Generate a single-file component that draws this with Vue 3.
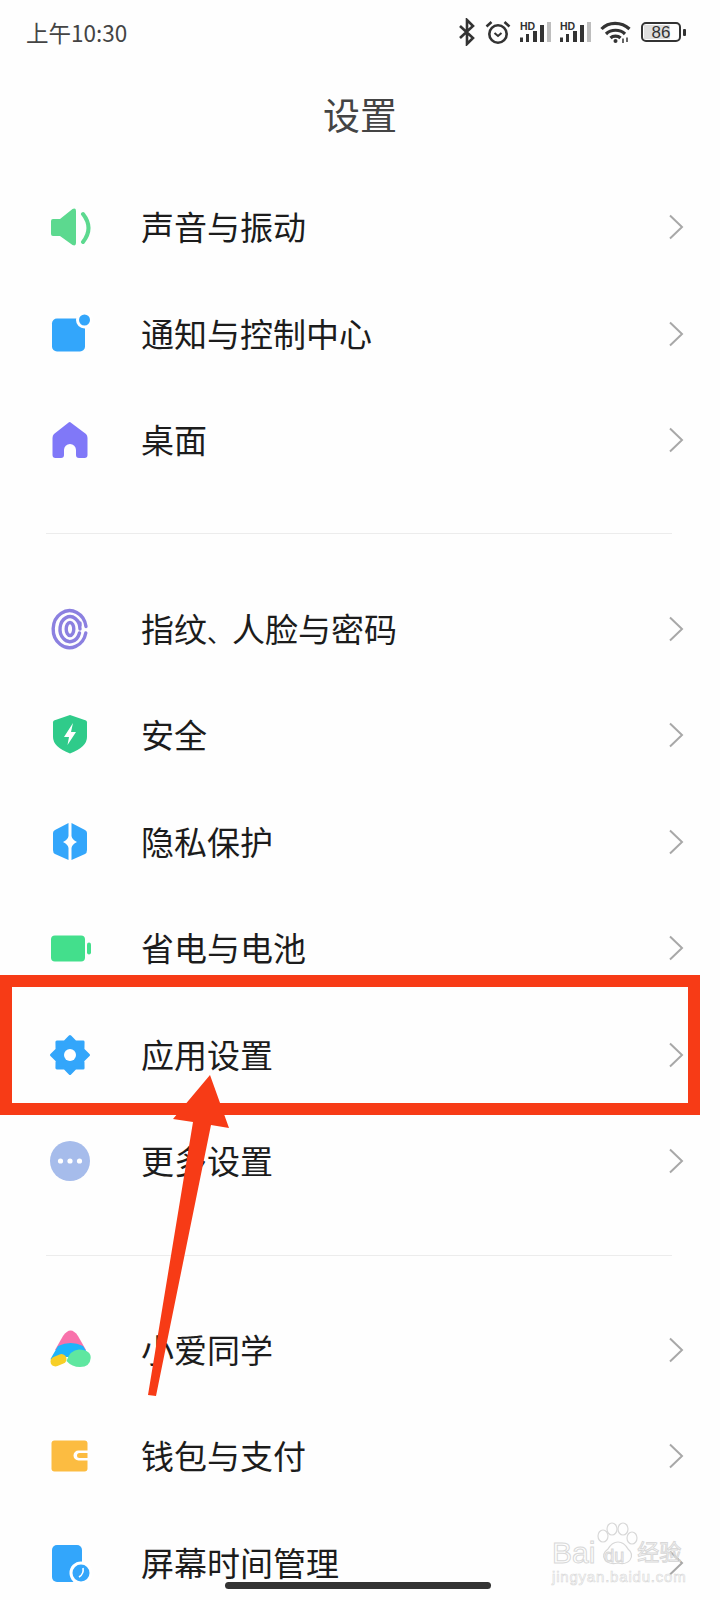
<script setup>
const groups = [
  [
    { name: '声音与振动', icon: 'sound' },
    { name: '通知与控制中心', icon: 'notify' },
    { name: '桌面', icon: 'home' },
  ],
  [
    { name: '指纹、人脸与密码', icon: 'finger' },
    { name: '安全', icon: 'shield' },
    { name: '隐私保护', icon: 'privacy' },
    { name: '省电与电池', icon: 'battery' },
    { name: '应用设置', icon: 'gear' },
    { name: '更多设置', icon: 'more' },
  ],
  [
    { name: '小爱同学', icon: 'xiaoai' },
    { name: '钱包与支付', icon: 'wallet' },
    { name: '屏幕时间管理', icon: 'screen' },
  ],
]
const gearPoints = Array.from({ length: 16 }, (_, i) => {
  const a = (i * Math.PI) / 8
  const r = i % 2 === 0 ? 18.5 : 14
  return `${(24 + r * Math.sin(a)).toFixed(2)},${(24 - r * Math.cos(a)).toFixed(2)}`
}).join(' ')
</script>

<template>
  <div class="page">
    <div class="status">
      <span class="time">上午10:30</span>
      <div class="status-icons">
        <svg width="18" height="28" viewBox="0 0 18 28" fill="none" stroke="#333" stroke-width="2.6"><path d="M2 8 15 20 9 26V2L15 8 2 20"/></svg>
        <svg width="26" height="24" viewBox="0 0 26 24" fill="none" stroke="#333" stroke-width="2.6"><circle cx="13" cy="14" r="8.7"/><path d="M9.500 13l3.500 3 3.500-3" stroke-width="2"/><path d="M1.500 6.500 6.500 2M24.500 6.500 19.500 2"/></svg>
        <span v-for="n in 2" :key="n" class="signal">
          <span class="hd">HD</span>
          <svg width="31" height="20" viewBox="0 0 31 20"><rect x="0" y="15.500" width="3" height="4.500" fill="#333"/><rect x="6" y="12" width="3" height="8" fill="#333"/><rect x="13" y="9" width="4" height="11" fill="#333"/><rect x="20" y="3" width="4" height="17" fill="#333"/><rect x="27" y="0" width="4" height="20" fill="#bdbdbd"/></svg>
        </span>
        <svg width="31" height="22" viewBox="0 0 31 22" fill="none" stroke="#333" stroke-width="3.200"><path d="M1.500 8C8.500 0.500 21.500 0.500 29.500 8"/><path d="M6 13C11 8 20 8 25 13"/><path d="M10.500 17C13 14.500 18 14.500 20.500 17"/><circle cx="15.500" cy="20" r="2" fill="#333" stroke="none"/><path d="M23 17.500v4.500M27 16.500v4.500" stroke-width="1.500"/></svg>
        <div class="batt"><div class="batt-body"><span class="batt-fill"></span><span class="batt-num">86</span></div><span class="batt-tip"></span></div>
      </div>
    </div>
    <h1 class="title">设置</h1>
    <div class="groups">
      <section v-for="(group, g) in groups" :key="g" class="group">
        <div v-for="item in group" :key="item.name" class="row">
          <span class="icon">
            <svg width="48" height="48" viewBox="0 0 48 48">
              <template v-if="item.icon === 'sound'">
                <path d="M5 18Q5 16 7 16H14L26.500 6Q30 4.500 30 8V40Q30 43.500 26.500 42L14 33H7Q5 33 5 31Z" fill="#5cd98f"/>
                <path d="M37 11Q48 25 37 39" fill="none" stroke="#5cd98f" stroke-width="4" stroke-linecap="round"/>
              </template>
              <template v-else-if="item.icon === 'notify'">
                <rect x="6" y="8.500" width="33" height="33" rx="5" fill="#33a6fb"/>
                <circle cx="38.500" cy="10" r="8.500" fill="#fff"/>
                <circle cx="38.500" cy="10" r="5.500" fill="#33a6fb"/>
              </template>
              <template v-else-if="item.icon === 'home'">
                <path d="M24 6 40 18Q41.500 19.500 41.500 22V39Q41.500 42 38.500 42H33Q30 42 30 39V34A6 6 0 0 0 18 34V39Q18 42 15 42H9.500Q6.500 42 6.500 39V22Q6.500 19.500 8 18L22 7Q23 6 24 6Z" fill="#8078f8"/>
              </template>
              <template v-else-if="item.icon === 'finger'">
                <g fill="none" stroke="#8b80e0" stroke-width="3.400" stroke-linecap="round">
                  <path d="M40 21.500A16.500 18.500 0 1 0 39.800 28"/>
                  <path d="M34 24A10 12.500 0 1 0 33.500 28M34 18V21" />
                  <ellipse cx="24" cy="24" rx="3.800" ry="6.500"/>
                </g>
              </template>
              <template v-else-if="item.icon === 'shield'">
                <path d="M24 4 40 9.500Q41 10 41 11.500V26Q41 36 24 42.500Q7 36 7 26V11.500Q7 10 8 9.500Z" fill="#2fcb8a"/>
                <path d="M27 12 18 26H23L21.500 34 30 21H25Z" fill="#fff"/>
              </template>
              <template v-else-if="item.icon === 'privacy'">
                <path d="M22.500 5V18Q22 21.500 17 24Q22 26.500 22.500 30V42L9 36Q7 35 7 32V15Q7 13 9 12Z" fill="#33a6fb"/>
                <path d="M25.500 5V18Q26 21.500 31 24Q26 26.500 25.500 30V42L39 36Q41 35 41 32V15Q41 13 39 12Z" fill="#33a6fb"/>
              </template>
              <template v-else-if="item.icon === 'battery'">
                <rect x="5" y="11.500" width="34" height="26" rx="4" fill="#43df8c"/>
                <rect x="41" y="18.500" width="4" height="12" rx="2" fill="#43df8c"/>
              </template>
              <template v-else-if="item.icon === 'gear'">
                <polygon :points="gearPoints" fill="#33a6fb" stroke="#33a6fb" stroke-width="3" stroke-linejoin="round"/>
                <circle cx="24" cy="24" r="6" fill="#fff"/>
              </template>
              <template v-else-if="item.icon === 'more'">
                <circle cx="24" cy="24" r="20" fill="#a6bceb"/>
                <circle cx="14.500" cy="24" r="2.600" fill="#fff"/>
                <circle cx="24" cy="24" r="2.600" fill="#fff"/>
                <circle cx="33.500" cy="24" r="2.600" fill="#fff"/>
              </template>
              <template v-else-if="item.icon === 'xiaoai'">
                <path d="M17 10Q24.700 -1 32 10L40 24H9Z" fill="#f872ab"/>
                <path d="M12 20Q25 14 37 20L44 31H30H20L10 38 4.500 33Z" fill="#1eb4fb"/>
                <path d="M9.500 35.500 15.500 33" fill="none" stroke="#f7cf27" stroke-width="10" stroke-linecap="round"/>
                <path d="M20.500 35Q24 24 33 23.500Q45 24 44.700 32Q44 41 34 41Q26 41 20.500 35Z" fill="#5fe7a0"/>
              </template>
              <template v-else-if="item.icon === 'wallet'">
                <rect x="5.500" y="8.500" width="36" height="31" rx="3" fill="#fcbc41"/>
                <path d="M42 18.500H32.500a5 5 0 0 0 0 10H42Z" fill="#fff"/>
                <path d="M41.500 21H33.500a2.500 2.500 0 0 0 0 5H41.500Z" fill="#fcbc41"/>
              </template>
              <template v-else>
                <rect x="6" y="6" width="30" height="37" rx="5" fill="#33a6fb"/>
                <circle cx="35" cy="34" r="11.500" fill="#fff"/>
                <circle cx="35" cy="34" r="8.500" fill="#33a6fb"/>
                <path d="M37 29Q38 35 33 38" fill="none" stroke="#fff" stroke-width="1.600"/>
              </template>
            </svg>
          </span>
          <span v-if="item.icon === 'finger'" class="label">指纹<span class="dun">、</span>人脸与密码</span>
          <span v-else class="label">{{ item.name }}</span>
          <svg class="chev" width="16" height="26" viewBox="0 0 16 26" fill="none" stroke="#a8a8a8" stroke-width="2"><path d="M1 1.500 13 13 1 24.500"/></svg>
        </div>
      </section>
    </div>

    <div class="frame"></div>
    <svg class="arrow" width="240" height="340" viewBox="0 0 240 340">
      <path d="M210 5 229 58 211 55 156 326 148 325 193 52 173 49Z" fill="#f73b16"/>
    </svg>
    <div class="mark">
      <svg class="paw" width="46" height="46" viewBox="0 0 46 46" fill="none" stroke="#d8d8d8" stroke-width="1.200">
        <ellipse cx="7" cy="14" rx="5" ry="6"/>
        <ellipse cx="16" cy="7" rx="5" ry="6"/>
        <ellipse cx="27" cy="7" rx="5" ry="6"/>
        <ellipse cx="36" cy="16" rx="5" ry="6"/>
        <path d="M22 20Q28 20 32 27Q38 32 34 38Q30 43 22 41Q13 43 9 38Q5 32 12 27Q16 20 22 20Z"/>
      </svg>
      <div class="mark-top"><span class="bai">Bai</span><span class="du">du</span><span class="jy">经验</span></div>
      <div class="mark-url">jingyan.baidu.com</div>
    </div>
    <div class="home-bar"></div>
  </div>
</template>

<style>
html, body { margin: 0; background: #fff; }
</style>

<style scoped>
.page {
  position: relative;
  width: 720px;
  height: 1600px;
  overflow: hidden;
  background: #fefefe;
  color: #1c1c1c;
  font-family: "Noto Sans CJK SC", "Noto Sans", sans-serif;
}
.status {
  height: 64px;
  padding: 0 34px 0 26px;
  display: flex;
  justify-content: space-between;
  align-items: center;
  box-sizing: border-box;
}
.time { font-size: 22.500px; color: #444; }
.status-icons { display: flex; align-items: center; gap: 9px; }
.status-icons svg { display: block; }
.signal { position: relative; display: block; width: 31px; height: 20px; }
.hd {
  position: absolute;
  left: 0;
  top: 0;
  font: 700 10.500px/8px "Liberation Sans", sans-serif;
  color: #333;
}
.batt { display: flex; align-items: center; gap: 2px; margin-left: 1px; }
.batt-body {
  position: relative;
  width: 40px;
  height: 20px;
  border: 2.500px solid #333;
  border-radius: 5px;
  box-sizing: border-box;
  display: flex;
  align-items: center;
  justify-content: center;
}
.batt-fill { position: absolute; left: 1px; top: 1px; bottom: 1px; width: 26px; background: #dedede; }
.batt-num { position: relative; font: 17px/1 "Liberation Sans", sans-serif; color: #333; }
.batt-tip { width: 3px; height: 7px; background: #333; border-radius: 1px; }
.title {
  margin: 16px 0 0;
  height: 68px;
  line-height: 68px;
  text-align: center;
  font-size: 37px;
  font-weight: 400;
  color: #444;
}
.groups { padding: 26px 0 0; }
.group { position: relative; padding: 0 46px 40px; }
.group:nth-child(2) { padding-top: 42px; padding-bottom: 41px; }
.group:nth-child(3) { padding-top: 41px; }
.group:not(:last-child)::after {
  content: "";
  position: absolute;
  left: 46px;
  right: 48px;
  bottom: 0;
  height: 1px;
  background: #ececec;
}
.row {
  height: 106.500px;
  display: flex;
  align-items: center;
}
.icon { width: 48px; height: 48px; flex: none; display: block; }
.icon svg { display: block; }
.label {
  margin-left: 47px;
  padding-bottom: 1px;
  font-size: 33px;
  line-height: 1;
  flex: 1;
}
.dun { font-size: 25px; }
.chev { margin-right: -11px; flex: none; }
.frame {
  position: absolute;
  left: 0;
  top: 975px;
  width: 676px;
  height: 116px;
  border: 12px solid #f73b16;
}
.arrow { position: absolute; left: 0; top: 1070px; }
.mark {
  position: absolute;
  left: 552px;
  top: 1540px;
  width: 140px;
  color: transparent;
  -webkit-text-stroke: 1px #d8d8d8;
  font-family: "Liberation Sans", "Noto Sans CJK SC", sans-serif;
}
.paw { position: absolute; left: 44px; top: -18px; }
.mark-top { display: flex; align-items: center; font-size: 30px; line-height: 26px; height: 26px; }
.du { font-size: 18px; margin: 6px 8px 0 9px; width: 20px; }
.jy { font-size: 22px; margin-left: 5px; }
.mark-url { margin-top: 2px; font-size: 15px; line-height: 18px; -webkit-text-stroke: 0.600px #d8d8d8; letter-spacing: 0.800px; }
.home-bar {
  position: absolute;
  left: 225px;
  top: 1582px;
  width: 266px;
  height: 7px;
  border-radius: 3.500px;
  background: #333;
}
</style>
